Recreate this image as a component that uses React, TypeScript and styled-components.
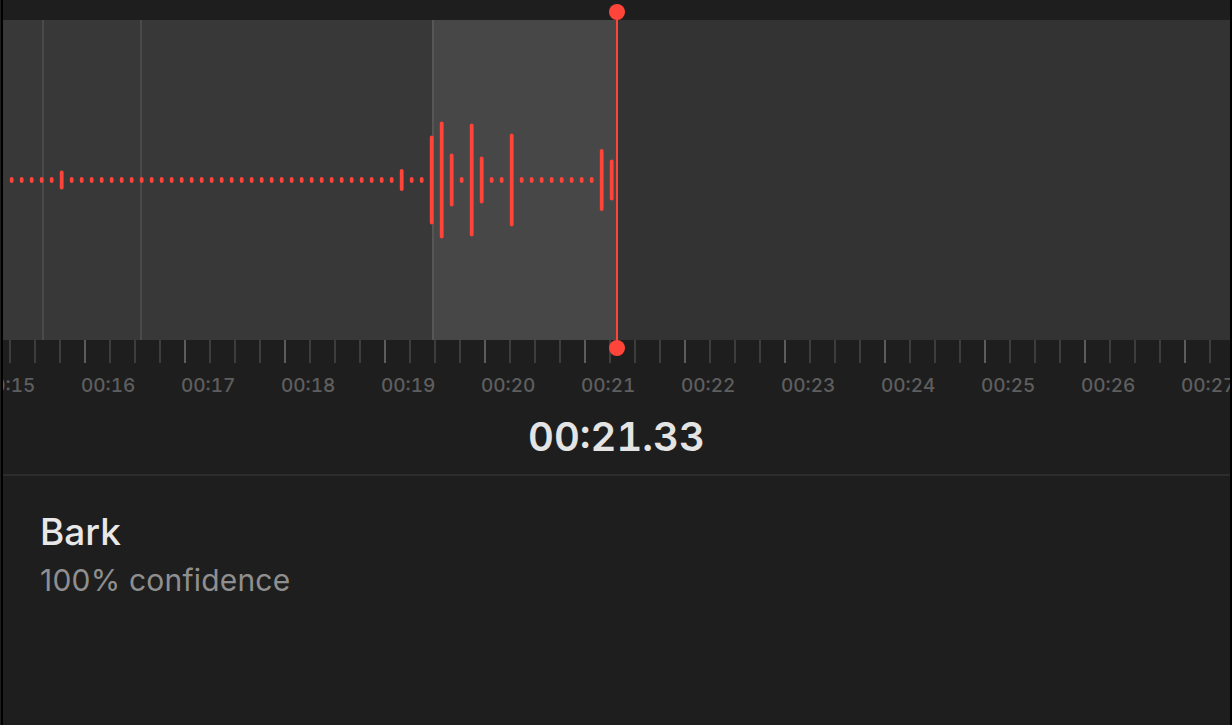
import React from 'react';
import styled, { createGlobalStyle } from 'styled-components';

const GlobalStyle = createGlobalStyle`
    html, body {
        margin: 0;
        padding: 0;
        background: #1e1e1e;
    }
    body {
        font-family: Inter, 'Noto Sans', 'Liberation Sans', sans-serif;
    }
`;

const Window = styled.div`
    height: 725px;
    margin-left: 1px;
    border-left: 2px solid #000;
    border-right: 2px solid #000;
    background: #1e1e1e;
    display: flex;
    flex-direction: column;
    overflow: hidden;
`;

const Timeline = styled.div`
    position: relative;
    display: flex;
    flex-direction: column;
`;

const TopBar = styled.div`
    height: 20px;
    background: #1e1e1e;
`;

const WavePanel = styled.div`
    position: relative;
    height: 320px;
    display: flex;
`;

const Segment = styled.div<{ $w?: number; $tone: 'played' | 'active' | 'rest' }>`
    flex: ${(p) => (p.$w ? `0 0 ${p.$w}px` : '1 1 auto')};
    background: ${(p) => (p.$tone === 'active' ? '#474747' : p.$tone === 'played' ? '#383838' : '#333333')};
`;

const GridLine = styled.div<{ $strong?: boolean }>`
    flex: 0 0 2px;
    background: ${(p) => (p.$strong ? '#565656' : '#4a4a4a')};
`;

const WaveSvg = styled.svg`
    position: absolute;
    inset: 0;
    width: 100%;
    height: 100%;
`;

const Playhead = styled.div`
    position: absolute;
    left: 613px;
    top: 12px;
    width: 2px;
    height: 336px;
    background: #ff453a;
`;

const Knob = styled.span<{ $bottom?: boolean }>`
    position: absolute;
    left: -7px;
    ${(p) => (p.$bottom ? 'bottom: -8px;' : 'top: -8px;')}
    width: 16px;
    height: 16px;
    border-radius: 50%;
    background: #ff453a;
`;

const Ruler = styled.div`
    display: flex;
    flex-direction: column;
`;

const TickRow = styled.div`
    display: flex;
    height: 23px;
    padding-left: 6px;
`;

const Tick = styled.div<{ $major?: boolean }>`
    flex: 0 0 25px;
    box-sizing: border-box;
    border-left: 2px solid ${(p) => (p.$major ? '#5c5c5c' : '#3d3d3d')};
`;

const LabelRow = styled.div`
    display: flex;
    margin-top: 13px;
    margin-left: -22px;
    height: 19px;
`;

const TickLabel = styled.div`
    flex: 0 0 100px;
    font-size: 19px;
    line-height: 19px;
    font-weight: 500;
    color: #5e5e5e;
    white-space: nowrap;
    font-variant-numeric: tabular-nums;
`;

const Clock = styled.div`
    margin-top: 22px;
    text-align: center;
    font-size: 40px;
    line-height: 40px;
    font-weight: 600;
    color: #e4e4e4;
    font-variant-numeric: tabular-nums;
`;

const Divider = styled.div`
    margin-top: 17px;
    height: 2px;
    background: #2c2c2c;
`;

const Detection = styled.div`
    padding: 37px 37px 0;
    display: flex;
    flex-direction: column;
`;

const Title = styled.div`
    font-size: 37px;
    line-height: 37px;
    font-weight: 500;
    color: #e8e8e8;
`;

const Subtitle = styled.div`
    margin-top: 15px;
    font-size: 30px;
    line-height: 30px;
    letter-spacing: 0.2px;
    color: #8f8f8f;
`;

// tall bars by index (bar centers sit every 10px)
const peaks: Record<number, number> = {
    5: 19,
    39: 22,
    42: 89,
    43: 117,
    44: 53,
    46: 113,
    47: 47,
    50: 93,
    59: 62,
    60: 41,
};

const bars = Array.from({ length: 61 }, (_, i) => peaks[i] ?? 6);
const labels = Array.from({ length: 13 }, (_, i) => `00:${15 + i}`);

export default function App() {
    return (
        <>
            <GlobalStyle />
            <Window>
                <Timeline>
                    <TopBar />
                    <WavePanel>
                        <Segment $w={39} $tone="played" />
                        <GridLine />
                        <Segment $w={96} $tone="played" />
                        <GridLine />
                        <Segment $w={290} $tone="played" />
                        <GridLine $strong />
                        <Segment $w={182} $tone="active" />
                        <Segment $tone="rest" />
                        <WaveSvg>
                            {bars.map((h, i) => (
                                <rect
                                    key={i}
                                    x={6.8 + i * 10}
                                    y={160 - h / 2}
                                    width={3.8}
                                    height={h}
                                    rx={1.9}
                                    fill="#ff453a"
                                />
                            ))}
                        </WaveSvg>
                    </WavePanel>
                    <Ruler>
                        <TickRow>
                            {Array.from({ length: 50 }, (_, i) => (
                                <Tick key={i} $major={i % 4 === 3} />
                            ))}
                        </TickRow>
                        <LabelRow>
                            {labels.map((l) => (
                                <TickLabel key={l}>{l}</TickLabel>
                            ))}
                        </LabelRow>
                    </Ruler>
                    <Playhead>
                        <Knob />
                        <Knob $bottom />
                    </Playhead>
                </Timeline>
                <Clock>00:21.33</Clock>
                <Divider />
                <Detection>
                    <Title>Bark</Title>
                    <Subtitle>100% confidence</Subtitle>
                </Detection>
            </Window>
        </>
    );
}
